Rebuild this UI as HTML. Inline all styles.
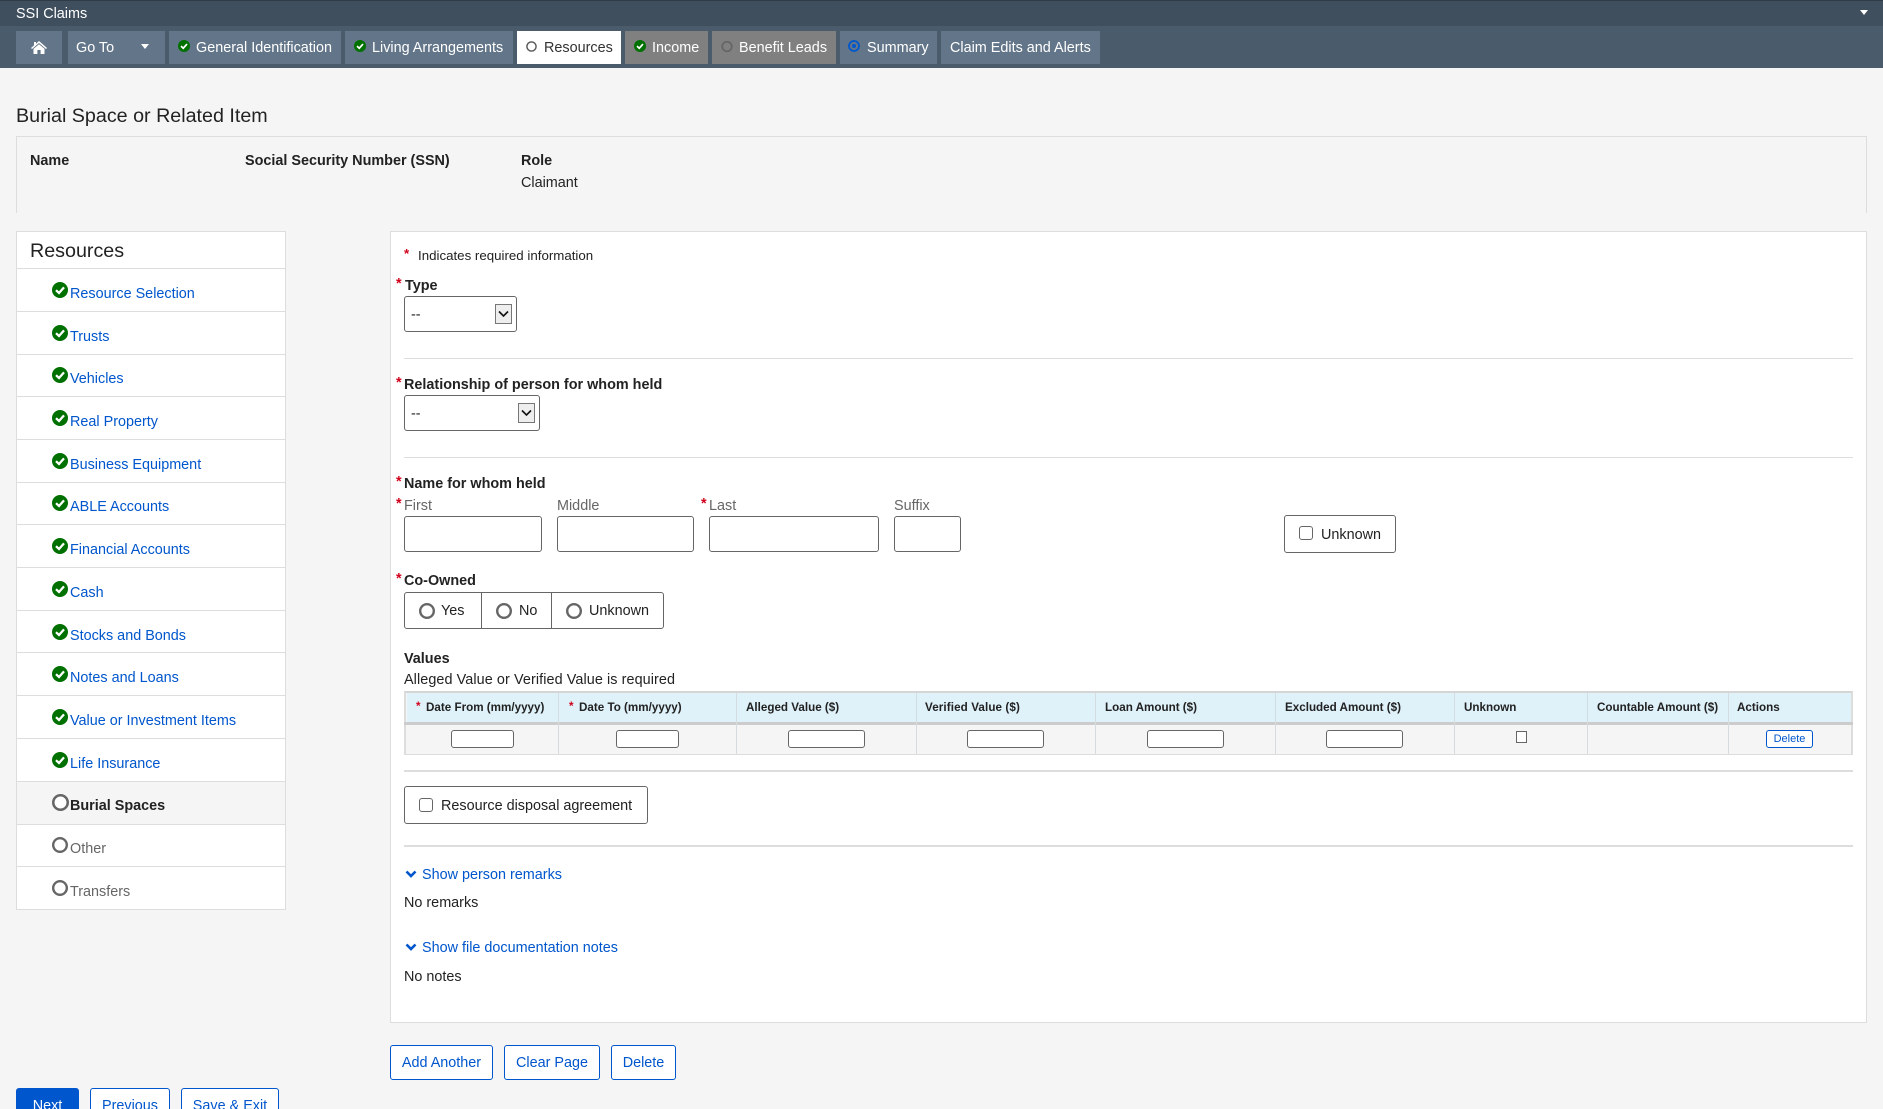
<!DOCTYPE html>
<html><head><meta charset="utf-8"><title>Burial Space or Related Item</title>
<style>
*{box-sizing:border-box}
html,body{margin:0;padding:0;width:1883px;height:1109px;overflow:hidden;background:#f5f5f5}
body{position:relative;font-family:"Liberation Sans",Arial,sans-serif;font-size:14.4px;color:#222}
.a,.t,svg.i{position:absolute}
.t{white-space:nowrap;line-height:20px;margin-top:1px}
.t.s{margin-top:0}
.b{font-weight:700}
.l{color:#0056cc}
.g{color:#666}
.w{color:#fff}
.s{color:#d0021b;font-weight:700}
.tab{position:absolute;top:31px;height:33px;background:#637689}
.box{position:absolute;background:#fff;border:1px solid #666;border-radius:3px}
.btn{position:absolute;background:#fff;border:1px solid #0056cc;border-radius:3px;color:#0056cc;text-align:center;white-space:nowrap}
.ln{position:absolute;background:#ddd;height:1px}
.th{font-weight:700;font-size:11.65px}
.v{position:absolute;width:1px;background:#d5dce0}
.ar{position:absolute;width:17px;height:20px;background:#eee;border:1px solid #777}
.row{position:absolute;left:17px;width:268px;height:1px;background:#ddd}
</style></head><body>
<svg width="0" height="0" style="position:absolute"><defs>
<symbol id="ok" viewBox="0 0 16 16"><circle cx="8" cy="8" r="8" fill="#007000"/><path d="M4 8.2L7 11L12 5.4" fill="none" stroke="#fff" stroke-width="2.3"/></symbol>
<symbol id="ring" viewBox="0 0 16 16"><circle cx="8" cy="8" r="6.8" fill="#fff" stroke="#666" stroke-width="2.4"/></symbol>
<symbol id="chev" viewBox="0 0 12 8"><path d="M1.5 1.5L6 6L10.5 1.5" fill="none" stroke="#0056cc" stroke-width="2.6"/></symbol>
</defs></svg>

<!-- header -->
<div class="a" style="left:0;top:0;width:1883px;height:1px;background:#2f3b47"></div>
<div class="a" style="left:0;top:1px;width:1883px;height:25px;background:#404f5e"></div>
<div class="a" style="left:0;top:26px;width:1883px;height:42px;background:#4a5b6c"></div>
<div class="t w" style="left:16px;top:3px">SSI Claims</div>
<svg class="i" style="left:1860px;top:10px" width="8" height="5"><path d="M0 0H8L4 5Z" fill="#fff"/></svg>

<div class="tab" style="left:16px;width:46px"></div>
<svg class="i" style="left:31px;top:41px" width="16" height="13" viewBox="0 0 16 13"><path d="M8 0L16 7L15 8L8 2L1 8L0 7L3 4.4V1H5V2.7Z M8 3.2L13.5 7.8V13H9.6V9H6.4V13H2.5V7.8Z" fill="#fff"/></svg>
<div class="tab" style="left:68px;width:97px"></div>
<div class="t w" style="left:76px;top:37px">Go To</div>
<svg class="i" style="left:141px;top:44px" width="8" height="5"><path d="M0 0H8L4 5Z" fill="#fff"/></svg>
<div class="tab" style="left:169px;width:172px"></div>
<svg class="i" style="left:178px;top:40px" width="12" height="12"><use href="#ok"/></svg>
<div class="t w" style="left:196px;top:37px">General Identification</div>
<div class="tab" style="left:345px;width:168px"></div>
<svg class="i" style="left:354px;top:40px" width="12" height="12"><use href="#ok"/></svg>
<div class="t w" style="left:372px;top:37px">Living Arrangements</div>
<div class="tab" style="left:517px;width:104px;background:#fff"></div>
<svg class="i" style="left:526px;top:41px" width="11" height="11" viewBox="0 0 11 11"><circle cx="5.5" cy="5.5" r="4.6" fill="none" stroke="#555" stroke-width="1.4"/></svg>
<div class="t" style="left:544px;top:37px;color:#333">Resources</div>
<div class="tab" style="left:625px;width:83px;background:#808080"></div>
<svg class="i" style="left:634px;top:40px" width="12" height="12"><use href="#ok"/></svg>
<div class="t w" style="left:652px;top:37px">Income</div>
<div class="tab" style="left:712px;width:124px;background:#808080"></div>
<svg class="i" style="left:721px;top:41px" width="12" height="12" viewBox="0 0 12 12"><circle cx="6" cy="5.5" r="4.8" fill="none" stroke="#666" stroke-width="1.8"/></svg>
<div class="t w" style="left:739px;top:37px">Benefit Leads</div>
<div class="tab" style="left:840px;width:97px"></div>
<svg class="i" style="left:848px;top:40px" width="12" height="12" viewBox="0 0 12 12"><circle cx="6" cy="6" r="5" fill="none" stroke="#0056cc" stroke-width="1.8"/><circle cx="6" cy="6" r="2" fill="#0056cc"/></svg>
<div class="t w" style="left:867px;top:37px">Summary</div>
<div class="tab" style="left:941px;width:159px"></div>
<div class="t w" style="left:950px;top:37px">Claim Edits and Alerts</div>

<!-- title -->
<div class="t" style="left:16px;top:105px;font-size:19.7px">Burial Space or Related Item</div>

<!-- info -->
<div class="a" style="left:16px;top:136px;width:1851px;height:77px;border:1px solid #ddd;border-bottom:0"></div>
<div class="t b" style="left:30px;top:150px">Name</div>
<div class="t b" style="left:245px;top:150px">Social Security Number (SSN)</div>
<div class="t b" style="left:521px;top:150px">Role</div>
<div class="t" style="left:521px;top:172px">Claimant</div>

<!-- sidebar -->
<div class="a" style="left:16px;top:231px;width:270px;height:679px;background:#fff;border:1px solid #ddd"></div>
<div class="t" style="left:30px;top:240px;font-size:19.7px">Resources</div>
<div class="a" style="left:17px;top:782px;width:268px;height:42px;background:#f5f5f5"></div>
<div class="row" style="top:268px"></div><div class="row" style="top:311px"></div><div class="row" style="top:354px"></div><div class="row" style="top:396px"></div><div class="row" style="top:439px"></div><div class="row" style="top:482px"></div><div class="row" style="top:524px"></div><div class="row" style="top:567px"></div><div class="row" style="top:610px"></div><div class="row" style="top:652px"></div><div class="row" style="top:695px"></div><div class="row" style="top:738px"></div><div class="row" style="top:781px"></div><div class="row" style="top:824px"></div><div class="row" style="top:866px"></div>

<svg class="i" style="left:52px;top:282px" width="16" height="16"><use href="#ok"/></svg><div class="t l" style="left:70px;top:283px">Resource Selection</div>
<svg class="i" style="left:52px;top:325px" width="16" height="16"><use href="#ok"/></svg><div class="t l" style="left:70px;top:326px">Trusts</div>
<svg class="i" style="left:52px;top:367px" width="16" height="16"><use href="#ok"/></svg><div class="t l" style="left:70px;top:368px">Vehicles</div>
<svg class="i" style="left:52px;top:410px" width="16" height="16"><use href="#ok"/></svg><div class="t l" style="left:70px;top:411px">Real Property</div>
<svg class="i" style="left:52px;top:453px" width="16" height="16"><use href="#ok"/></svg><div class="t l" style="left:70px;top:454px">Business Equipment</div>
<svg class="i" style="left:52px;top:495px" width="16" height="16"><use href="#ok"/></svg><div class="t l" style="left:70px;top:496px">ABLE Accounts</div>
<svg class="i" style="left:52px;top:538px" width="16" height="16"><use href="#ok"/></svg><div class="t l" style="left:70px;top:539px">Financial Accounts</div>
<svg class="i" style="left:52px;top:581px" width="16" height="16"><use href="#ok"/></svg><div class="t l" style="left:70px;top:582px">Cash</div>
<svg class="i" style="left:52px;top:624px" width="16" height="16"><use href="#ok"/></svg><div class="t l" style="left:70px;top:625px">Stocks and Bonds</div>
<svg class="i" style="left:52px;top:666px" width="16" height="16"><use href="#ok"/></svg><div class="t l" style="left:70px;top:667px">Notes and Loans</div>
<svg class="i" style="left:52px;top:709px" width="16" height="16"><use href="#ok"/></svg><div class="t l" style="left:70px;top:710px">Value or Investment Items</div>
<svg class="i" style="left:52px;top:752px" width="16" height="16"><use href="#ok"/></svg><div class="t l" style="left:70px;top:753px">Life Insurance</div>
<svg class="i" style="left:52px;top:794px" width="17" height="17"><use href="#ring"/></svg><div class="t b" style="left:70px;top:795px">Burial Spaces</div>
<svg class="i" style="left:52px;top:837px" width="16" height="16"><use href="#ring"/></svg><div class="t g" style="left:70px;top:838px">Other</div>
<svg class="i" style="left:52px;top:880px" width="16" height="16"><use href="#ring"/></svg><div class="t g" style="left:70px;top:881px">Transfers</div>

<!-- bottom nav -->
<div class="btn" style="left:16px;top:1088px;width:63px;height:40px;background:#0056cc;color:#fff;line-height:34px">Next</div>
<div class="btn" style="left:90px;top:1088px;width:80px;height:40px;line-height:34px">Previous</div>
<div class="btn" style="left:181px;top:1088px;width:98px;height:40px;line-height:34px">Save &amp; Exit</div>

<!-- main -->
<div class="a" style="left:390px;top:231px;width:1477px;height:792px;background:#fff;border:1px solid #ddd"></div>
<div class="t s" style="left:404px;top:244px;font-size:13.3px">*</div>
<div class="t" style="left:418px;top:245px;font-size:13.3px">Indicates required information</div>

<div class="t s" style="left:396px;top:274px">*</div>
<div class="t b" style="left:405px;top:275px">Type</div>
<div class="box" style="left:404px;top:296px;width:113px;height:36px"></div>
<div class="t" style="left:411px;top:304px">--</div>
<div class="ar" style="left:495px;top:304px"></div>
<svg class="i" style="left:498px;top:310px" width="11" height="8"><path d="M1 1.5L5.5 6L10 1.5" fill="none" stroke="#111" stroke-width="1.6"/></svg>
<div class="ln" style="left:404px;top:358px;width:1449px"></div>

<div class="t s" style="left:396px;top:373px">*</div>
<div class="t b" style="left:404px;top:374px">Relationship of person for whom held</div>
<div class="box" style="left:404px;top:395px;width:136px;height:36px"></div>
<div class="t" style="left:411px;top:403px">--</div>
<div class="ar" style="left:518px;top:403px"></div>
<svg class="i" style="left:521px;top:409px" width="11" height="8"><path d="M1 1.5L5.5 6L10 1.5" fill="none" stroke="#111" stroke-width="1.6"/></svg>
<div class="ln" style="left:404px;top:457px;width:1449px"></div>

<div class="t s" style="left:396px;top:472px">*</div>
<div class="t b" style="left:404px;top:473px">Name for whom held</div>
<div class="t s" style="left:396px;top:494px">*</div>
<div class="t g" style="left:404px;top:495px">First</div>
<div class="t g" style="left:557px;top:495px">Middle</div>
<div class="t s" style="left:701px;top:494px">*</div>
<div class="t g" style="left:709px;top:495px">Last</div>
<div class="t g" style="left:894px;top:495px">Suffix</div>
<div class="box" style="left:404px;top:516px;width:138px;height:36px"></div>
<div class="box" style="left:557px;top:516px;width:137px;height:36px"></div>
<div class="box" style="left:709px;top:516px;width:170px;height:36px"></div>
<div class="box" style="left:894px;top:516px;width:67px;height:36px"></div>
<div class="box" style="left:1284px;top:515px;width:112px;height:38px"></div>
<div class="a" style="left:1299px;top:526px;width:14px;height:14px;background:#fff;border:1.5px solid #666;border-radius:3px"></div>
<div class="t" style="left:1321px;top:524px">Unknown</div>

<div class="t s" style="left:396px;top:569px">*</div>
<div class="t b" style="left:404px;top:570px">Co-Owned</div>
<div class="box" style="left:404px;top:592px;width:260px;height:37px"></div>
<div class="a" style="left:481px;top:592px;width:1px;height:37px;background:#666"></div>
<div class="a" style="left:551px;top:592px;width:1px;height:37px;background:#666"></div>
<svg class="i" style="left:419px;top:603px" width="16" height="16"><use href="#ring"/></svg><div class="t" style="left:441px;top:600px">Yes</div>
<svg class="i" style="left:496px;top:603px" width="16" height="16"><use href="#ring"/></svg><div class="t" style="left:519px;top:600px">No</div>
<svg class="i" style="left:566px;top:603px" width="16" height="16"><use href="#ring"/></svg><div class="t" style="left:589px;top:600px">Unknown</div>

<div class="t b" style="left:404px;top:648px">Values</div>
<div class="t" style="left:404px;top:669px;letter-spacing:.085px">Alleged Value or Verified Value is required</div>

<!-- table -->
<div class="a" style="left:404px;top:691px;width:1449px;height:64px;background:#f5f5f5;border:2px solid #ddd;border-top-color:#d5d5d5;border-bottom-width:1px"></div>
<div class="a" style="left:407px;top:693px;width:1444px;height:29px;background:#dff2fa"></div>
<div class="a" style="left:404px;top:722px;width:1449px;height:3px;background:#ccc"></div>
<div class="v" style="left:558px;top:693px;height:61px"></div>
<div class="v" style="left:736px;top:693px;height:61px"></div>
<div class="v" style="left:916px;top:693px;height:61px"></div>
<div class="v" style="left:1095px;top:693px;height:61px"></div>
<div class="v" style="left:1275px;top:693px;height:61px"></div>
<div class="v" style="left:1454px;top:693px;height:61px"></div>
<div class="v" style="left:1587px;top:693px;height:61px"></div>
<div class="v" style="left:1728px;top:693px;height:61px"></div>
<div class="t s" style="left:416px;top:697px;font-size:11.6px">*</div><div class="t th" style="left:426px;top:697px">Date From (mm/yyyy)</div>
<div class="t s" style="left:569px;top:697px;font-size:11.6px">*</div><div class="t th" style="left:579px;top:697px">Date To (mm/yyyy)</div>
<div class="t th" style="left:746px;top:697px">Alleged Value ($)</div>
<div class="t th" style="left:925px;top:697px;letter-spacing:.1px">Verified Value ($)</div>
<div class="t th" style="left:1105px;top:697px">Loan Amount ($)</div>
<div class="t th" style="left:1285px;top:697px">Excluded Amount ($)</div>
<div class="t th" style="left:1464px;top:697px">Unknown</div>
<div class="t th" style="left:1597px;top:697px">Countable Amount ($)</div>
<div class="t th" style="left:1737px;top:697px">Actions</div>
<div class="box" style="left:451px;top:730px;width:63px;height:18px"></div>
<div class="box" style="left:616px;top:730px;width:63px;height:18px"></div>
<div class="box" style="left:788px;top:730px;width:77px;height:18px"></div>
<div class="box" style="left:967px;top:730px;width:77px;height:18px"></div>
<div class="box" style="left:1147px;top:730px;width:77px;height:18px"></div>
<div class="box" style="left:1326px;top:730px;width:77px;height:18px"></div>
<div class="a" style="left:1516px;top:731px;width:11px;height:12px;background:#fff;border:1px solid #666"></div>
<div class="btn" style="left:1766px;top:730px;width:47px;height:18px;font-size:11px;line-height:17px">Delete</div>

<div class="a" style="left:404px;top:770px;width:1449px;height:2px;background:#ddd"></div>
<div class="box" style="left:404px;top:786px;width:244px;height:38px"></div>
<div class="a" style="left:419px;top:798px;width:14px;height:14px;background:#fff;border:1.5px solid #666;border-radius:3px"></div>
<div class="t" style="left:441px;top:795px">Resource disposal agreement</div>
<div class="a" style="left:404px;top:845px;width:1449px;height:2px;background:#ddd"></div>

<svg class="i" style="left:405px;top:870px" width="12" height="8"><use href="#chev"/></svg>
<div class="t l" style="left:422px;top:864px">Show person remarks</div>
<div class="t" style="left:404px;top:892px">No remarks</div>
<svg class="i" style="left:405px;top:943px" width="12" height="8"><use href="#chev"/></svg>
<div class="t l" style="left:422px;top:937px">Show file documentation notes</div>
<div class="t" style="left:404px;top:966px">No notes</div>

<div class="btn" style="left:390px;top:1045px;width:103px;height:35px;line-height:35px">Add Another</div>
<div class="btn" style="left:504px;top:1045px;width:96px;height:35px;line-height:35px">Clear Page</div>
<div class="btn" style="left:611px;top:1045px;width:65px;height:35px;line-height:35px">Delete</div>
</body></html>
